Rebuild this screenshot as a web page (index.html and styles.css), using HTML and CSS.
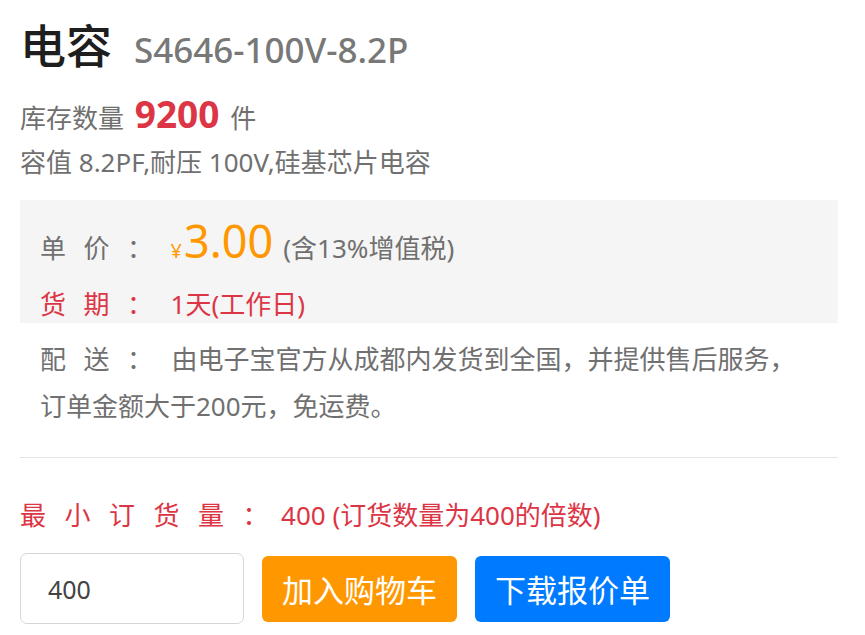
FILE: index.html
```html
<!DOCTYPE html>
<html lang="zh-CN">
<head>
<meta charset="utf-8">
<title>电容 S4646-100V-8.2P</title>
<link rel="stylesheet" href="styles.css">
</head>
<body>
<div class="wrap">
  <h1 class="title"><span class="name">电容</span><span class="model">S4646-100V-8.2P</span></h1>
  <p class="stock">库存数量 <strong class="qty">9200</strong> 件</p>
  <p class="desc">容值 8.2PF,耐压 100V,硅基芯片电容</p>

  <div class="pricebox">
    <div class="row price-row">
      <span class="label">单价：</span>
      <span class="yen">¥</span><span class="price">3.00</span>
      <span class="tax">(含13%增值税)</span>
    </div>
    <div class="row lead-row">
      <span class="label">货期：</span>
      <span class="lead">1天(工作日)</span>
    </div>
  </div>

  <p class="ship"><span class="ship-label">配送：</span>由电子宝官方从成都内发货到全国，并提供售后服务，订单金额大于200元，免运费。</p>

  <hr class="divider">

  <p class="moq"><span class="moq-label">最小订货量：</span>400 (订货数量为400的倍数)</p>

  <div class="actions">
    <input class="qty-input" type="text" value="400">
    <button class="btn btn-cart" type="button">加入购物车</button>
    <button class="btn btn-quote" type="button">下载报价单</button>
  </div>
</div>
</body>
</html>
```

FILE: styles.css
```css
* { box-sizing: border-box; }

html, body {
  margin: 0;
  padding: 0;
  background: #fff;
}

body {
  font-family: "Noto Sans", "Noto Sans CJK SC", sans-serif;
  color: #707070;
}

.wrap {
  width: 838px;
  padding-left: 20px;
}

.title {
  margin: 0;
  padding-top: 17px;
  display: flex;
  align-items: baseline;
  gap: 22px;
  font-weight: normal;
  line-height: 56px;
}

.name {
  font-size: 46px;
  color: #1e1e1e;
  font-weight: 500;
}

.model {
  font-size: 35px;
  color: #787878;
  font-weight: 500;
}

.stock {
  margin: 14px 0 0;
  font-size: 26px;
  line-height: 44px;
  color: #707070;
}

.qty {
  font-size: 37px;
  font-weight: 700;
  color: #dc3545;
  margin: 0 4px;
}

.desc {
  margin: 2px 0 0;
  font-size: 26px;
  line-height: 40px;
  color: #707070;
}

.pricebox {
  margin-top: 18px;
  background: #f5f5f5;
  padding: 10px 20px 0;
  height: 123px;
}

.row {
  display: flex;
  align-items: baseline;
}

.label {
  display: inline-block;
  flex-shrink: 0;
  font-size: 26px;
  letter-spacing: 17.5px;
  white-space: nowrap;
}

.price-row {
  height: 74px;
  color: #707070;
}

.yen {
  font-size: 20px;
  color: #ff9800;
  margin-right: 2px;
}

.price {
  font-size: 45px;
  color: #ff9800;
  margin-right: 10px;
}

.tax {
  font-size: 26px;
  color: #707070;
}

.lead-row {
  color: #dc3545;
  height: 39px;
}

.lead {
  font-size: 26px;
}

.ship {
  margin: 13px 0 0;
  padding-left: 20px;
  padding-right: 20px;
  font-size: 26px;
  line-height: 47px;
  color: #707070;
}

.ship-label {
  letter-spacing: 17.5px;
  margin-right: 1px;
}

.divider {
  margin: 27px 0 0;
  border: 0;
  border-top: 1px solid #e4e4e4;
  height: 0;
}

.moq {
  margin: 36px 0 0;
  font-size: 26px;
  line-height: 42px;
  color: #dc3545;
}

.moq-label {
  letter-spacing: 18.5px;
  margin-right: -6px;
}

.actions {
  margin-top: 17px;
  display: flex;
  align-items: center;
  gap: 18px;
}

.qty-input {
  width: 224px;
  height: 71px;
  border: 1.5px solid #d3d7dc;
  border-radius: 7px;
  padding: 0 0 0 27px;
  font-family: "Noto Sans", sans-serif;
  font-size: 25px;
  color: #444;
  background: #fff;
  outline: none;
}

.btn {
  width: 195px;
  height: 66px;
  border: 0;
  border-radius: 6px;
  font-family: "Noto Sans CJK SC", sans-serif;
  font-size: 31px;
  color: #fff;
  padding: 0;
  cursor: pointer;
}

.btn-cart { background: #ff9800; }
.btn-quote { background: #007bff; }
```
